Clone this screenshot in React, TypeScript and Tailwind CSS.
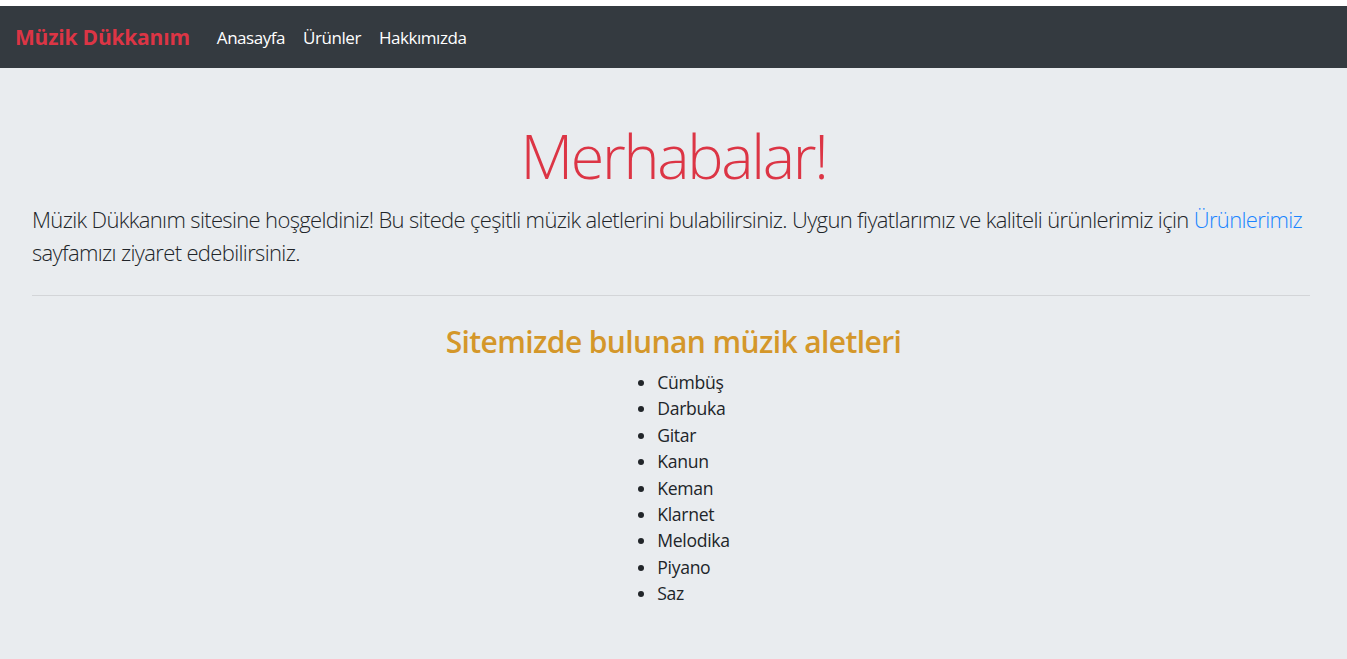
import React from "react";

const items = ["Cümbüş", "Darbuka", "Gitar", "Kanun", "Keman", "Klarnet", "Melodika", "Piyano", "Saz"];

export default function App() {
  return (
    <div className="min-h-[659px] flex flex-col bg-[#e9ecef]" style={{ fontFamily: '"Open Sans", "Noto Sans", sans-serif' }}>
      <div className="h-[6px] bg-white shrink-0" />
      <nav className="h-[62px] bg-[#343a40] flex items-center px-[15px] shrink-0">
        <a className="text-[21px] font-bold text-[#dc3545] mr-[27px] tracking-[-0.2px] mt-[2px]">Müzik Dükkanım</a>
        <div className="flex gap-[18px] text-[17px] text-white tracking-[-0.45px] mt-[2px]">
          <a>Anasayfa</a>
          <a>Ürünler</a>
          <a>Hakkımızda</a>
        </div>
      </nav>
      <main className="flex-1 px-[32px] pt-[51px]">
        <h1 className="text-center text-[61px] leading-[74px] font-light text-[#dc3545] tracking-[-2.3px]">Merhabalar!</h1>
        <p className="mt-[10px] text-[22px] leading-[33px] font-light text-[#212529] tracking-[-0.65px]">
          Müzik Dükkanım sitesine hoşgeldiniz! Bu sitede çeşitli müzik aletlerini bulabilirsiniz. Uygun fiyatlarımız ve kaliteli ürünlerimiz için{" "}
          <a className="text-[#1a85ff]">Ürünlerimiz</a> sayfamızı ziyaret edebilirsiniz.
        </p>
        <hr className="mt-[26px] mb-[27px] border-t border-[#d3d5d8] mr-[5px]" />
        <h3 className="text-center text-[30px] leading-[37px] font-semibold text-[#d4972a] tracking-[-0.6px]">Sitemizde bulunan müzik aletleri</h3>
        <div className="text-center mt-[9px]">
          <ul className="inline-block text-left list-disc pl-[40px] marker:text-[#212529]">
            {items.map((it) => (
              <li key={it} className="text-[17.6px] leading-[26.4px] text-[#212529] tracking-[-0.3px]">
                {it}
              </li>
            ))}
          </ul>
        </div>
      </main>
    </div>
  );
}
